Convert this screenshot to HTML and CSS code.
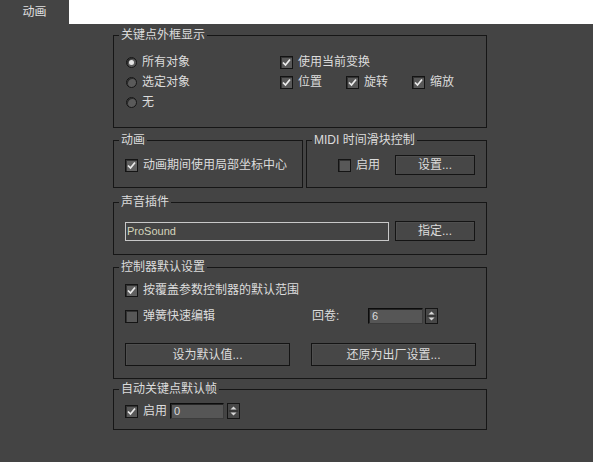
FILE: index.html
```html
<!DOCTYPE html>
<html lang="zh-CN">
<head>
<meta charset="utf-8">
<title>动画</title>
<link rel="stylesheet" href="styles.css">
</head>
<body>
<div class="tabbar"><div class="tab">动画</div></div>
<div class="panel">

  <div class="group g1">
    <div class="title">关键点外框显示</div>
    <div class="body grid1">
      <label class="opt"><span class="radio on"></span>所有对象</label>
      <label class="opt"><span class="cb"><svg viewBox="0 0 11 11"><polyline points="2,5.5 4.5,8 9,2.5"/></svg></span>使用当前变换</label>
      <label class="opt"><span class="radio"></span>选定对象</label>
      <div class="trio">
        <label class="opt"><span class="cb"><svg viewBox="0 0 11 11"><polyline points="2,5.5 4.5,8 9,2.5"/></svg></span>位置</label>
        <label class="opt"><span class="cb"><svg viewBox="0 0 11 11"><polyline points="2,5.5 4.5,8 9,2.5"/></svg></span>旋转</label>
        <label class="opt"><span class="cb"><svg viewBox="0 0 11 11"><polyline points="2,5.5 4.5,8 9,2.5"/></svg></span>缩放</label>
      </div>
      <label class="opt"><span class="radio"></span>无</label>
    </div>
  </div>

  <div class="pair">
    <div class="group g2a">
      <div class="title">动画</div>
      <div class="body row20 pl11">
        <label class="opt"><span class="cb light"><svg viewBox="0 0 11 11"><polyline points="2,5.5 4.5,8 9,2.5"/></svg></span>动画期间使用局部坐标中心</label>
      </div>
    </div>
    <div class="group g2b">
      <div class="title">MIDI 时间滑块控制</div>
      <div class="body row20 midi">
        <label class="opt"><span class="cb"></span>启用</label>
        <button class="btn w80">设置...</button>
      </div>
    </div>
  </div>

  <div class="group g3">
    <div class="title">声音插件</div>
    <div class="body row20 sound">
      <div class="textfield">ProSound</div>
      <button class="btn w80">指定...</button>
    </div>
  </div>

  <div class="group g4">
    <div class="title">控制器默认设置</div>
    <div class="body g4body">
      <div class="row20">
        <label class="opt"><span class="cb light"><svg viewBox="0 0 11 11"><polyline points="2,5.5 4.5,8 9,2.5"/></svg></span>按覆盖参数控制器的默认范围</label>
      </div>
      <div class="row20 spinrow">
        <label class="opt springs"><span class="cb"></span>弹簧快速编辑</label>
        <span class="lbl">回卷:</span>
        <div class="num w55">6</div>
        <div class="spin"><svg viewBox="0 0 11 14"><polygon points="2.5,5.5 8.5,5.5 5.5,2.5"/><line x1="1" y1="7" x2="10" y2="7"/><polygon points="2.5,8.5 8.5,8.5 5.5,11.5"/></svg></div>
      </div>
      <div class="btnrow">
        <button class="btn tall">设为默认值...</button>
        <button class="btn tall">还原为出厂设置...</button>
      </div>
    </div>
  </div>

  <div class="group g5">
    <div class="title">自动关键点默认帧</div>
    <div class="body autorow">
      <label class="opt"><span class="cb"><svg viewBox="0 0 11 11"><polyline points="2,5.5 4.5,8 9,2.5"/></svg></span>启用</label>
      <div class="num w54">0</div>
      <div class="spin"><svg viewBox="0 0 11 14"><polygon points="2.5,5.5 8.5,5.5 5.5,2.5"/><line x1="1" y1="7" x2="10" y2="7"/><polygon points="2.5,8.5 8.5,8.5 5.5,11.5"/></svg></div>
    </div>
  </div>

</div>
</body>
</html>
```

FILE: styles.css
```css
* { box-sizing: border-box; }

body {
  margin: 0;
  width: 593px;
  height: 462px;
  overflow: hidden;
  background: #444444;
  color: #dcdcdc;
  font: 12px/14px "Liberation Sans", "Noto Sans CJK SC", sans-serif;
}

.tabbar {
  display: flex;
  height: 24px;
  background: #ffffff;
}

.tab {
  width: 69px;
  background: #444444;
  display: flex;
  align-items: center;
  justify-content: center;
  color: #e0e0e0;
}

.panel {
  margin-left: 113px;
  width: 374px;
  padding-top: 11px;
}

.group {
  border: 1px solid #161616;
}

.title {
  width: fit-content;
  height: 14px;
  margin: -8px 0 0 5px;
  padding: 0 2px;
  background: #444444;
  line-height: 14px;
  white-space: nowrap;
}

.opt {
  display: flex;
  align-items: center;
  gap: 5px;
  white-space: nowrap;
}

.radio {
  width: 11px;
  height: 11px;
  border-radius: 50%;
  background: #5a5a5a;
  border: 1px solid #151515;
  box-shadow: inset 1px 1px 0 #2a2a2a;
  display: flex;
  align-items: center;
  justify-content: center;
}

.radio.on::after {
  content: "";
  width: 5px;
  height: 5px;
  border-radius: 50%;
  background: #e6e6e6;
}

.cb {
  width: 13px;
  height: 13px;
  flex: none;
  border: 1px solid #141414;
  background: #585858;
  box-shadow: inset 1px 1px 0 #333333;
  display: flex;
}

.cb.light { background: #606060; }

.cb svg {
  width: 11px;
  height: 11px;
}

.cb polyline {
  fill: none;
  stroke: #ececec;
  stroke-width: 1.7;
}

/* group 1 */
.g1 { }

.grid1 {
  display: grid;
  grid-template-columns: 155px auto;
  grid-auto-rows: 20px;
  padding: 10px 0 15px 12px;
  align-items: center;
}

.grid1 .cb { margin-left: -1px; }

.trio {
  display: grid;
  grid-template-columns: 66px 66px 66px;
  align-items: center;
}

/* group 2 */
.pair {
  display: flex;
  gap: 3px;
  margin-top: 12px;
}

.g2a { width: 190px; }
.g2b { flex: 1; }

.row20 {
  display: flex;
  align-items: center;
  height: 20px;
}

.body.row20 {
  box-sizing: content-box;
  padding-top: 8px;
  padding-bottom: 12px;
}

.pl11 { padding-left: 11px; }

.midi {
  padding-left: 31px;
  padding-right: 11px;
}

.btn {
  margin: 0;
  padding: 0;
  height: 20px;
  font: inherit;
  color: #dcdcdc;
  background: #474747;
  border: 1px solid #141414;
  box-shadow: inset 1px 1px 0 #4f4f4f;
  display: flex;
  align-items: center;
  justify-content: center;
}

.w80 {
  width: 80px;
  margin-left: auto;
}

/* group 3 */
.g3 { margin-top: 14px; }

.body.sound {
  padding: 12px 11px 13px 11px;
}

.textfield {
  width: 264px;
  height: 19px;
  border: 1px solid #c8c8c8;
  background: #444444;
  color: #d4d4bc;
  font-size: 11px;
  line-height: 17px;
  padding-left: 1px;
}

/* group 4 */
.g4 { margin-top: 12px; }

.g4body {
  padding: 6px 0 12px 11px;
}

.spinrow { margin-top: 6px; }

.springs { width: 187px; }

.lbl { width: 56px; }

.num {
  height: 16px;
  background: #565656;
  border: 1px solid;
  border-color: #0c0c0c #3c3c3c #3c3c3c #0c0c0c;
  box-shadow: inset 1px 1px 0 #262626;
  color: #dcdcdc;
  font-size: 11px;
  line-height: 14px;
  padding-left: 3px;
}

.w55 { width: 55px; }
.w54 { width: 54px; }

.spin {
  width: 13px;
  height: 16px;
  margin-left: 2px;
  border: 1px solid #151515;
  background: #474747;
  display: flex;
}

.spin svg {
  width: 11px;
  height: 14px;
}

.spin polygon { fill: #d8d8d8; }
.spin line { stroke: #2a2a2a; stroke-width: 1; }

.btnrow {
  display: flex;
  gap: 21px;
  margin-top: 17px;
}

.btn.tall {
  width: 165px;
  height: 23px;
}

/* group 5 */
.g5 { margin-top: 10px; }

.autorow {
  display: flex;
  align-items: center;
  height: 16px;
  box-sizing: content-box;
  padding: 7px 0 10px 11px;
}

.autorow .opt { width: 45px; }

.autorow .spin { margin-left: 3px; }
```
